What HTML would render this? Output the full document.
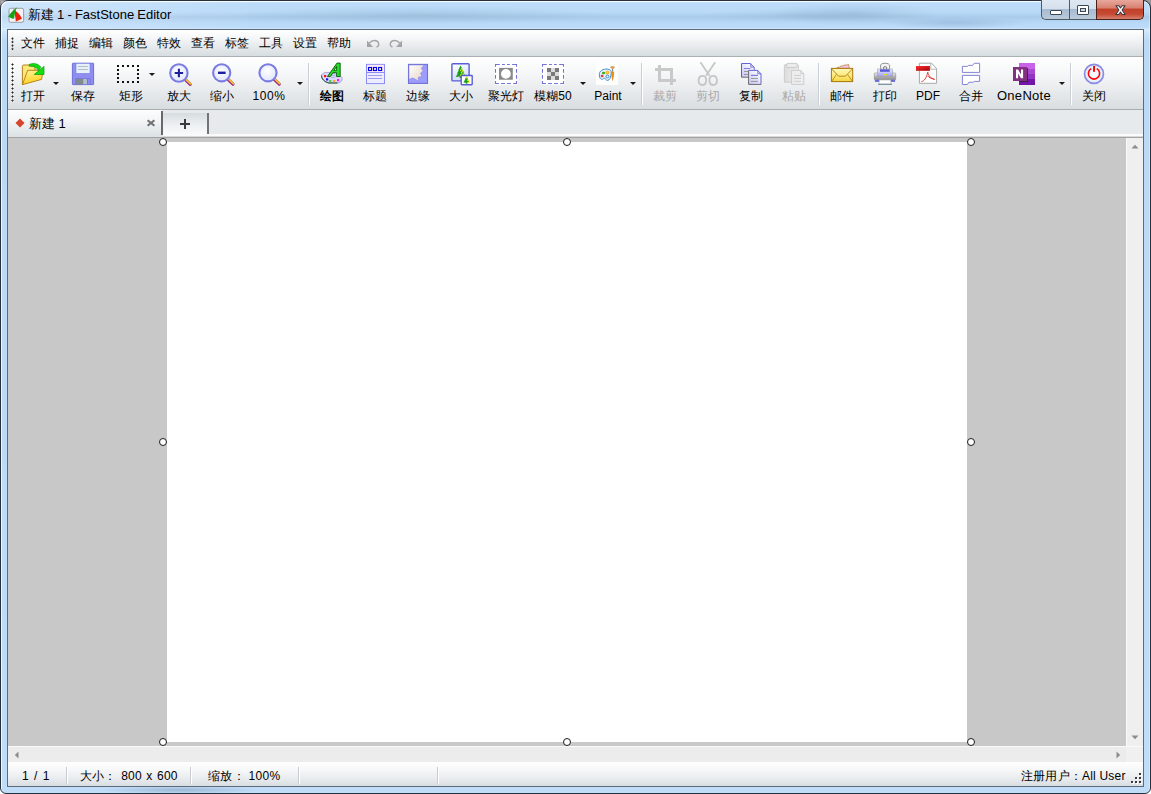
<!DOCTYPE html>
<html><head><meta charset="utf-8">
<style>
*{margin:0;padding:0;box-sizing:border-box}
html,body{width:1151px;height:794px;overflow:hidden;background:linear-gradient(180deg,#9c9c9c 0,#7a7a7a 12px,#ffffff 40px);font-family:"Liberation Sans",sans-serif;font-size:12px;color:#000}
.a{position:absolute}
#frame{position:absolute;left:0;top:0;width:1151px;height:794px;border:1px solid #27313c;box-shadow:inset 1px 1px 0 rgba(255,255,255,.75),inset -1px 0 0 rgba(255,255,255,.35);border-radius:8px 8px 6px 6px;background:linear-gradient(180deg,#dbeefe 0,#bcdcf9 2px,#badaf8 11px,#aacbea 16px,#b8d9f8 22px,#bddcf9 27px,#d6ebfd 28px,#bad9f7 40px,#bfdcf8 100%);overflow:hidden}
#client{position:absolute;left:7px;top:29px;width:1137px;height:758px;border:1px solid #5d6b79;background:#e7eaed}
.menu{position:absolute;left:8px;top:30px;width:1135px;height:27px;background:linear-gradient(180deg,#ffffff 0,#f7f8f9 25%,#e9ecee 60%,#d6dce0 100%);border-bottom:1px solid #aab0b4}
.mi{position:absolute;top:37px;font-size:12px;line-height:13px;white-space:nowrap}
.tb{position:absolute;left:8px;top:57px;width:1135px;height:53px;background:linear-gradient(180deg,#ffffff 0,#f6f7f8 30%,#e8ebed 65%,#d8dde0 100%);border-bottom:1px solid #a9adb1}
.lbl{position:absolute;top:90px;font-size:12px;line-height:13px;white-space:nowrap;transform:translateX(-50%)}
.dd{position:absolute;width:0;height:0;border-left:3px solid transparent;border-right:3px solid transparent;border-top:3px solid #1a1a1a}
.sep{position:absolute;top:63px;width:1px;height:42px;background:#c9cfd4;box-shadow:1px 0 0 #ffffff}
.dis{color:#a8a8a8}
svg{position:absolute;overflow:visible}
.cap{position:absolute;top:0;height:20px}
.stat{position:absolute;top:770px;font-size:12px;line-height:13px;white-space:nowrap}
.ssep{position:absolute;top:767px;width:1px;height:17px;background:#c8ccd0;box-shadow:1px 0 0 #fff}
.h{position:absolute;width:8.4px;height:8.4px;border:1.5px solid #1b1b1b;border-radius:50%;background:#fff}
</style></head><body>
<div id="frame"></div>
<!-- blurred bg streaks in glass -->
<div class="a" style="left:230px;top:6px;width:380px;height:18px;background:radial-gradient(ellipse at center,rgba(110,140,175,.22),rgba(120,150,185,0) 70%)"></div>
<div class="a" style="left:700px;top:8px;width:200px;height:14px;background:radial-gradient(ellipse at center,rgba(110,140,175,.15),rgba(120,150,185,0) 70%)"></div>

<div class="a" style="left:770px;top:2px;width:170px;height:24px;background:radial-gradient(ellipse at center,rgba(100,130,165,.20),rgba(100,130,165,0) 70%)"></div>
<div class="a" style="left:880px;top:17px;width:150px;height:12px;background:radial-gradient(ellipse at center,rgba(80,110,150,.22),rgba(80,110,150,0) 70%)"></div>
<div class="a" style="left:1px;top:1px;width:260px;height:28px;background:linear-gradient(90deg,rgba(255,255,255,.28),rgba(255,255,255,0))"></div>
<!-- title icon -->
<svg style="left:8px;top:7px" width="17" height="17" viewBox="0 0 17 17">
  <rect x="1" y="1.3" width="14.6" height="14" rx="1.6" fill="#f2f2f2" stroke="#8e969e" stroke-width="0.9"/>
  <path d="M5 2.2 C8.5 4 12.2 7.5 14 11.8 L7.8 14.6 C7.6 10 6.6 5.5 5 2.2 Z" fill="#e8200c"/>
  <path d="M8.8 0.2 C6 2.4 2.2 6 0.2 9.8 L4.6 11.8 L6.2 11.4 C6.4 8 7.2 4 8.8 0.2 Z" fill="#16a316"/>
</svg>
<div class="a" style="left:28px;top:7px;font-size:13px;line-height:16px;color:#000;word-spacing:-0.5px">新建 1 - FastStone Editor</div>

<!-- caption buttons -->
<div class="cap" style="left:1041px;width:29px;border:1px solid #4e5a66;border-top:none;border-right:none;border-radius:0 0 0 5px;background:linear-gradient(180deg,#dfe8f2 0,#d5e0ec 45%,#a9bbd0 50%,#b9cadc 100%)"></div>
<div class="cap" style="left:1069px;width:28px;border-bottom:1px solid #4e5a66;border-left:1px solid #4e5a66;background:linear-gradient(180deg,#dfe8f2 0,#d5e0ec 45%,#a9bbd0 50%,#b9cadc 100%)"></div>
<div class="cap" style="left:1096px;width:48px;border:1px solid #4b1f18;border-top:none;border-radius:0 0 5px 0;background:linear-gradient(180deg,#e8a89c 0,#d98272 40%,#c2412a 50%,#c54a33 75%,#d6826e 100%)"></div>
<div class="a" style="left:1050px;top:10px;width:12px;height:5px;background:#fff;border:1.5px solid #3c4854;border-radius:1px"></div>
<div class="a" style="left:1077px;top:5px;width:12px;height:10px;background:#fff;border:1.5px solid #3c4854;border-radius:1px"></div>
<div class="a" style="left:1080px;top:8px;width:6px;height:4px;background:#c9d7e6;border:1.5px solid #3c4854"></div>
<svg style="left:1114px;top:4.5px" width="13" height="11" viewBox="0 0 13 12">
  <path d="M1.5 0.7 H4.6 L6.5 3.3 L8.4 0.7 H11.5 L8.2 5.5 L11.6 10.3 H8.5 L6.5 7.6 L4.5 10.3 H1.4 L4.8 5.5 Z" fill="#ffffff" stroke="#3b3540" stroke-width="1.1" stroke-linejoin="round"/>
</svg>

<div class="a" style="left:100px;top:786px;width:160px;height:8px;background:radial-gradient(ellipse at center,rgba(90,120,150,.35),rgba(90,120,150,0) 70%)"></div>
<div id="client"></div>

<!-- menu -->
<div class="menu"></div>
<div class="a" style="left:11px;top:37px;width:3px;height:14px;background-image:radial-gradient(circle at 1.5px 1.5px,#2a2a2a 0.8px,rgba(255,255,255,0.9) 1.3px,transparent 1.5px);background-size:3px 3.5px"></div>
<div class="mi" style="left:21px">文件</div>
<div class="mi" style="left:55px">捕捉</div>
<div class="mi" style="left:89px">编辑</div>
<div class="mi" style="left:123px">颜色</div>
<div class="mi" style="left:157px">特效</div>
<div class="mi" style="left:191px">查看</div>
<div class="mi" style="left:225px">标签</div>
<div class="mi" style="left:259px">工具</div>
<div class="mi" style="left:293px">设置</div>
<div class="mi" style="left:327px">帮助</div>
<svg style="left:366px;top:39px" width="14" height="9" viewBox="0 0 14 9">
  <path d="M3.5 4 C6 1 11 0.5 12.5 4 C13.5 6 12 7.5 10.5 8" fill="none" stroke="#a3a3a3" stroke-width="1.4"/>
  <path d="M1 1.5 L1 8 L7 8 Z" fill="#a3a3a3"/>
</svg>
<svg style="left:389px;top:39px" width="14" height="9" viewBox="0 0 14 9">
  <path d="M10.5 4 C8 1 3 0.5 1.5 4 C0.5 6 2 7.5 3.5 8" fill="none" stroke="#a3a3a3" stroke-width="1.4"/>
  <path d="M13 1.5 L13 8 L7 8 Z" fill="#a3a3a3"/>
</svg>

<!-- toolbar -->
<div class="tb"></div>
<div class="a" style="left:11px;top:63px;width:3px;height:40px;background-image:radial-gradient(circle at 1.5px 1.5px,#2a2a2a 0.8px,rgba(255,255,255,0.9) 1.3px,transparent 1.5px);background-size:3px 4px"></div>

<div class="lbl" style="left:33px">打开</div>
<div class="lbl" style="left:83px">保存</div>
<div class="lbl" style="left:131px">矩形</div>
<div class="lbl" style="left:179px">放大</div>
<div class="lbl" style="left:222px">缩小</div>
<div class="lbl" style="left:269px;letter-spacing:0.6px">100%</div>
<div class="lbl" style="left:332px;font-weight:bold">绘图</div>
<div class="lbl" style="left:375px">标题</div>
<div class="lbl" style="left:418px">边缘</div>
<div class="lbl" style="left:461px">大小</div>
<div class="lbl" style="left:506px">聚光灯</div>
<div class="lbl" style="left:553px">模糊50</div>
<div class="lbl" style="left:608px">Paint</div>
<div class="lbl dis" style="left:665px">裁剪</div>
<div class="lbl dis" style="left:708px">剪切</div>
<div class="lbl" style="left:751px">复制</div>
<div class="lbl dis" style="left:794px">粘贴</div>
<div class="lbl" style="left:842px">邮件</div>
<div class="lbl" style="left:885px">打印</div>
<div class="lbl" style="left:928px">PDF</div>
<div class="lbl" style="left:971px">合并</div>
<div class="lbl" style="left:1024px;font-size:13px;letter-spacing:0.3px;top:89px">OneNote</div>
<div class="lbl" style="left:1094px">关闭</div>

<div class="dd" style="left:53px;top:82px"></div>
<div class="dd" style="left:149px;top:73px"></div>
<div class="dd" style="left:297px;top:82px"></div>
<div class="dd" style="left:580px;top:82px"></div>
<div class="dd" style="left:630px;top:82px"></div>
<div class="dd" style="left:1059px;top:82px"></div>

<div class="sep" style="left:308px"></div>
<div class="sep" style="left:641px"></div>
<div class="sep" style="left:818px"></div>
<div class="sep" style="left:1070px"></div>

<!-- tabs -->
<div class="a" style="left:8px;top:110px;width:154px;height:27px;background:linear-gradient(180deg,#fdfdfd 0,#f3f5f6 40%,#dbe1e5 100%)"></div>
<div class="a" style="left:161px;top:111px;width:2px;height:24px;background:#686868"></div>
<div class="a" style="left:163px;top:113px;width:45px;height:21px;background:linear-gradient(180deg,#d6dce0 0,#eef1f3 60%,#f8f9fa 100%)"></div>
<div class="a" style="left:207px;top:113px;width:2px;height:21px;background:#747474"></div>
<div class="a" style="left:163px;top:134px;width:980px;height:2px;background:#fbfbfb"></div>
<div class="a" style="left:163px;top:136px;width:980px;height:1px;background:#d8d8d8"></div>
<div class="a" style="left:8px;top:137px;width:1135px;height:1px;background:#a3a3a3"></div>
<svg style="left:15px;top:118px" width="10" height="10" viewBox="0 0 10 10"><path d="M5 0.5 L9.5 5 L5 9.5 L0.5 5 Z" fill="#d8432c"/></svg>
<div class="a" style="left:29px;top:116px;font-size:13px;line-height:15px">新建 1</div>
<svg style="left:146px;top:119px" width="10" height="8" viewBox="0 0 10 8"><path d="M1.6 1.2 L8.4 6.8 M8.4 1.2 L1.6 6.8" stroke="#727272" stroke-width="2.1"/></svg>
<svg style="left:179px;top:118px" width="12" height="12" viewBox="0 0 12 12"><path d="M6 1 V11 M1 6 H11" stroke="#3a3a3a" stroke-width="2"/></svg>

<!-- canvas area -->
<div class="a" style="left:8px;top:138px;width:1118px;height:608px;background:#c8c8c8"></div>
<div class="a" style="left:167px;top:142px;width:800px;height:600px;background:#ffffff"></div>
<div class="a" style="left:1126px;top:138px;width:1px;height:609px;background:#fafafa"></div>
<div class="a" style="left:1127px;top:138px;width:16px;height:609px;background:#efefef"></div>
<svg style="left:1131px;top:144px" width="8" height="5" viewBox="0 0 8 5"><path d="M0.5 4.5 L4 0.8 L7.5 4.5 Z" fill="#8c8c8c"/></svg>
<svg style="left:1131px;top:735px" width="8" height="5" viewBox="0 0 8 5"><path d="M0.5 0.5 L4 4.2 L7.5 0.5 Z" fill="#8c8c8c"/></svg>
<div class="a" style="left:8px;top:746px;width:1135px;height:1px;background:#fafafa"></div>
<div class="a" style="left:8px;top:747px;width:1118px;height:15px;background:#ececec"></div>
<div class="a" style="left:1126px;top:747px;width:17px;height:15px;background:#f0f0f0"></div>
<svg style="left:14px;top:751px" width="5" height="8" viewBox="0 0 5 8"><path d="M4.5 0.5 L0.8 4 L4.5 7.5 Z" fill="#8c8c8c"/></svg>
<svg style="left:1116px;top:751px" width="5" height="8" viewBox="0 0 5 8"><path d="M0.5 0.5 L4.2 4 L0.5 7.5 Z" fill="#8c8c8c"/></svg>

<!-- handles -->
<div class="h" style="left:158.8px;top:137.8px"></div>
<div class="h" style="left:562.8px;top:137.8px"></div>
<div class="h" style="left:966.8px;top:137.8px"></div>
<div class="h" style="left:158.8px;top:437.8px"></div>
<div class="h" style="left:966.8px;top:437.8px"></div>
<div class="h" style="left:158.8px;top:737.8px"></div>
<div class="h" style="left:562.8px;top:737.8px"></div>
<div class="h" style="left:966.8px;top:737.8px"></div>

<!-- status bar -->
<div class="a" style="left:8px;top:762px;width:1135px;height:24px;background:linear-gradient(180deg,#ffffff 0,#f7f8f9 30%,#e6e9ec 75%,#d9dee2 100%)"></div>
<div class="stat" style="left:22px;word-spacing:2px">1 / 1</div>
<div class="ssep" style="left:66px"></div>
<div class="stat" style="left:80px;word-spacing:1px;letter-spacing:0.2px">大小： 800 x 600</div>
<div class="ssep" style="left:190px"></div>
<div class="stat" style="left:208px;letter-spacing:0.3px">缩放： 100%</div>
<div class="ssep" style="left:298px"></div>
<div class="ssep" style="left:437px"></div>
<div class="stat" style="left:1021px;letter-spacing:0.2px">注册用户：All User</div>
<svg style="left:1130px;top:772px" width="13" height="13" viewBox="0 0 13 13" shape-rendering="crispEdges">
 <g fill="#ffffff"><rect x="10" y="2" width="2" height="2"/><rect x="6" y="6" width="2" height="2"/><rect x="10" y="6" width="2" height="2"/><rect x="2" y="10" width="2" height="2"/><rect x="6" y="10" width="2" height="2"/><rect x="10" y="10" width="2" height="2"/></g>
 <g fill="#3a3a3a"><rect x="9" y="1" width="2" height="2"/><rect x="5" y="5" width="2" height="2"/><rect x="9" y="5" width="2" height="2"/><rect x="1" y="9" width="2" height="2"/><rect x="5" y="9" width="2" height="2"/><rect x="9" y="9" width="2" height="2"/></g>
</svg>

<div id="icons">
<!-- open -->
<svg style="left:18px;top:60px" width="30" height="30" viewBox="0 0 30 30">
  <defs><linearGradient id="fy" x1="0" y1="0" x2="0.3" y2="1"><stop offset="0" stop-color="#fff3a0"/><stop offset="1" stop-color="#ffd21c"/></linearGradient></defs>
  <path d="M4.4 24.6 V6.4 Q4.4 5 5.8 5 H11.5 L12.8 6.2 H17 V10.2 H22.5 L22 15 Z" fill="#ffe87a" stroke="#a8770e" stroke-width="0.9"/>
  <path d="M4.5 24.6 L9.6 10.3 H25 L23.6 19.4 Z" fill="url(#fy)" stroke="#b07a10" stroke-width="0.9"/>
  <path d="M11 4.6 C14.5 2.8 19.5 2.8 23 7.2 L20.6 10.4 C18.2 7 14.5 5.8 11 6.2 Z" fill="#14d814" stroke="#0fa00f" stroke-width="0.6"/>
  <path d="M16.2 14.5 L26 14.5 L26 6.4 Z" fill="#10e010" stroke="#0c9c0c" stroke-width="0.7" stroke-linejoin="round"/>
</svg>
<!-- save -->
<svg style="left:68px;top:60px" width="30" height="30" viewBox="0 0 30 30">
  <rect x="4.4" y="3.2" width="21.2" height="21.4" rx="0.6" fill="#8e8ef2" stroke="#6767d6" stroke-width="0.9"/>
  <rect x="8" y="3.4" width="14" height="10" fill="#e4f2fb" stroke="#7b7be0" stroke-width="0.6"/>
  <path d="M10 6.5 H19.8 M10 9.5 H19.8" stroke="#b4b4b4" stroke-width="0.9"/>
  <rect x="7.4" y="18.2" width="15.2" height="6" fill="#7474d8"/>
  <rect x="8.2" y="18.9" width="7" height="5.3" fill="#7f8c8a"/>
  <rect x="15.2" y="18.9" width="3.8" height="5.3" fill="#b2bcd2"/>
  <rect x="20" y="18.9" width="1.8" height="5.3" fill="#8c8cf0"/>
</svg>
<!-- rect dotted -->
<svg style="left:110px;top:58px" width="40" height="30" viewBox="0 0 40 30">
  <g fill="#111">
    <rect x="7" y="7" width="2" height="2"/><rect x="12" y="7" width="2" height="2"/><rect x="17" y="7" width="2" height="2"/><rect x="22" y="7" width="2" height="2"/><rect x="27" y="7" width="2" height="2"/>
    <rect x="7" y="23" width="2" height="2"/><rect x="12" y="23" width="2" height="2"/><rect x="17" y="23" width="2" height="2"/><rect x="22" y="23" width="2" height="2"/><rect x="27" y="23" width="2" height="2"/>
    <rect x="7" y="11" width="2" height="2"/><rect x="7" y="15" width="2" height="2"/><rect x="7" y="19" width="2" height="2"/>
    <rect x="27" y="11" width="2" height="2"/><rect x="27" y="15" width="2" height="2"/><rect x="27" y="19" width="2" height="2"/>
  </g>
</svg>
<!-- zoom in / out / 100 -->
<svg style="left:165px;top:58px" width="30" height="30" viewBox="0 0 30 30">
  <defs><radialGradient id="zg" cx="0.45" cy="0.4" r="0.6"><stop offset="0" stop-color="#ffffff"/><stop offset="1" stop-color="#dfe6fb"/></radialGradient></defs>
  <path d="M19.8 21.2 L25.2 26.4" stroke="#a0308a" stroke-width="3.2" stroke-linecap="round"/>
  <path d="M20.3 20.8 L25.6 25.8" stroke="#f2c22a" stroke-width="1.8" stroke-linecap="round"/>
  <circle cx="13.9" cy="15" r="8.7" fill="url(#zg)" stroke="#7b7be4" stroke-width="2.1"/>
  <path d="M9.7 15 H18.1 M13.9 10.8 V19.2" stroke="#1e1ea0" stroke-width="2.1"/>
</svg>
<svg style="left:208px;top:58px" width="30" height="30" viewBox="0 0 30 30">
  <path d="M19.6 21 L25 26.2" stroke="#a0308a" stroke-width="3.2" stroke-linecap="round"/>
  <path d="M20.1 20.6 L25.4 25.6" stroke="#f2c22a" stroke-width="1.8" stroke-linecap="round"/>
  <circle cx="13.7" cy="14.8" r="8.6" fill="url(#zg)" stroke="#7b7be4" stroke-width="2.1"/>
  <path d="M10 14.8 H17.6" stroke="#1e1ea0" stroke-width="2.4"/>
</svg>
<svg style="left:254px;top:58px" width="30" height="30" viewBox="0 0 30 30">
  <path d="M19.9 21 L25.3 26.2" stroke="#a0308a" stroke-width="3.2" stroke-linecap="round"/>
  <path d="M20.4 20.6 L25.7 25.6" stroke="#f2c22a" stroke-width="1.8" stroke-linecap="round"/>
  <circle cx="14" cy="14.8" r="8.6" fill="url(#zg)" stroke="#7b7be4" stroke-width="2.1"/>
</svg>
<!-- draw -->
<svg style="left:318px;top:60px" width="28" height="28" viewBox="0 0 28 28">
  <path d="M3.6 15.5 C4 12.8 8 12 11.5 12.6 C16 13.4 22.5 14.8 23.8 17.5 C24.6 19.6 23.5 22.6 20 22.9 L11 23 C7.5 22.6 3.2 19.5 3.6 15.5 Z" fill="#dcdcfa" stroke="#8e8ee0" stroke-width="0.8"/>
  <path d="M3.6 15.5 C3.4 18.6 6 21.8 11 23 L19.5 23" fill="none" stroke="#1d4d1d" stroke-width="1"/>
  <rect x="6" y="15" width="2.2" height="2.2" fill="#ff1010"/>
  <rect x="8" y="18.3" width="2.2" height="2.2" fill="#1010ff"/>
  <rect x="11.2" y="20" width="2.2" height="2.2" fill="#55cc33"/>
  <rect x="15" y="20" width="2.2" height="2.2" fill="#ffa030"/>
  <rect x="19" y="19" width="2.2" height="2.2" fill="#ff10ff"/>
  <ellipse cx="15" cy="16.4" rx="2" ry="1.3" fill="none" stroke="#a0a0e8" stroke-width="0.8"/>
  <path d="M9.4 16.6 L19 3.1 H22.2 V16.6 H18.6 V12.6 H15 L12.3 16.6 Z M18.6 10.4 V6.4 L15.9 10.4 Z" fill="#22e022" stroke="#0b560b" stroke-width="0.9" fill-rule="evenodd"/>
</svg>
<!-- title -->
<svg style="left:362px;top:60px" width="28" height="28" viewBox="0 0 28 28">
  <rect x="4.5" y="4.4" width="18" height="19.2" fill="#ececfd" stroke="#8c8cf4" stroke-width="1"/>
  <rect x="5" y="4.9" width="17" height="7.4" fill="#f8e8f2"/>
  <path d="M4.5 12.5 H22.5" stroke="#8c8cf4" stroke-width="1"/>
  <g fill="#e8e8ff" stroke="#0000e6" stroke-width="1.1">
    <rect x="6.6" y="7.5" width="3" height="3"/><rect x="11.5" y="7.5" width="3" height="3"/><rect x="16.6" y="7.5" width="3" height="3"/>
  </g>
  <path d="M6 15.5 H20 M6 18.5 H20" stroke="#9494f0" stroke-width="0.9"/>
</svg>
<!-- edge -->
<svg style="left:404px;top:60px" width="28" height="28" viewBox="0 0 28 28">
  <defs><linearGradient id="eg" x1="0" y1="0" x2="1" y2="1"><stop offset="0" stop-color="#ffffff"/><stop offset="1" stop-color="#e6d2c0"/></linearGradient></defs>
  <rect x="4.5" y="4.4" width="19" height="19" fill="#9c9cfd" stroke="#7070d8" stroke-width="1.1"/>
  <path d="M5 5 H20 L17.2 8.5 L19.2 10.8 L16.5 13.2 L18 16.6 L14.3 17.2 L14.4 21.2 L12 19.6 L8.5 17.8 L5 19.6 Z" fill="url(#eg)" stroke="#8080e0" stroke-width="0.5"/>
</svg>
<!-- size -->
<svg style="left:448px;top:60px" width="28" height="28" viewBox="0 0 28 28">
  <defs><linearGradient id="sg" x1="0" y1="0" x2="0.3" y2="1"><stop offset="0" stop-color="#ffffff"/><stop offset="1" stop-color="#cfe0f8"/></linearGradient></defs>
  <rect x="3.9" y="3.8" width="17.2" height="17.1" rx="0.8" fill="url(#sg)" stroke="#5c5cd8" stroke-width="1.4"/>
  <path d="M12.5 5.6 L14.6 9.2 L13.9 9.3 L16.1 12.3 L15.2 12.4 L17.4 15.6 L13.6 16.2 L13.6 18 L11.6 18 L11.6 16.4 L7.6 17 L9.8 13.6 L8.9 13.5 L10.8 10.5 L10.1 10.4 Z" fill="#1e9e1e"/>
  <g fill="#f4f41c"><rect x="13" y="8" width="1.3" height="1.3"/><rect x="12" y="9.6" width="1.3" height="1.3"/><rect x="14" y="10.3" width="1.3" height="1.3"/><rect x="13" y="11.6" width="1.3" height="1.3"/><rect x="13.3" y="13.4" width="1.3" height="1.3"/><rect x="12" y="14.6" width="1.3" height="1.3"/><rect x="15" y="13.6" width="1.3" height="1.3"/></g>
  <rect x="13.2" y="15.5" width="11" height="9.2" rx="0.6" fill="#ffffff" stroke="#5c5cd8" stroke-width="1.4"/>
  <path d="M18.5 16.6 L20 18.8 L19.5 18.9 L21.6 22 L19.3 22.6 L19.3 23.8 L17.8 23.8 L17.8 22.7 L15.4 22.6 L17.4 19 L17 18.9 Z" fill="#1e9e1e"/>
  <g fill="#f4f41c"><rect x="18" y="17.2" width="1.2" height="1.2"/><rect x="19.2" y="19.6" width="1.6" height="1.4"/><rect x="20" y="21.6" width="1.2" height="1.2"/></g>
</svg>
<!-- spotlight -->
<svg style="left:492px;top:60px" width="28" height="28" viewBox="0 0 28 28">
  <rect x="2.9" y="3.2" width="22.4" height="21.4" fill="#ffffff"/>
  <path d="M3.2 4.5 H7.8 M3.5 4 V6.7 M10 4.5 H12.9 M15 4.5 H17.8 M20.1 4.5 H24.9 M24.5 4 V6.7 M3.5 9 V12.7 M3.5 15 V18.7 M3.5 21 V24 M24.5 9 V12.7 M24.5 15 V18.7 M24.5 21 V24 M3.2 23.5 H6.9 M9 23.5 H12.9 M15 23.5 H18.9 M21.2 23.5 H24.9" fill="none" stroke="#7474d4" stroke-width="1.05"/>
  <rect x="7.05" y="7.9" width="13.75" height="11.85" fill="#8a8a8a"/>
  <circle cx="13.9" cy="13.9" r="4.9" fill="#ffffff"/>
</svg>
<!-- blur -->
<svg style="left:539px;top:60px" width="28" height="28" viewBox="0 0 28 28">
  <rect x="2.9" y="3.2" width="22.4" height="21.4" fill="#ffffff"/>
  <path d="M3.2 4.5 H7.8 M3.5 4 V6.7 M10 4.5 H12.9 M15 4.5 H17.8 M20.1 4.5 H24.9 M24.5 4 V6.7 M3.5 9 V12.7 M3.5 15 V18.7 M3.5 21 V24 M24.5 9 V12.7 M24.5 15 V18.7 M24.5 21 V24 M3.2 23.5 H6.9 M9 23.5 H12.9 M15 23.5 H18.9 M21.2 23.5 H24.9" fill="none" stroke="#7474d4" stroke-width="1.05"/>
  <rect x="8" y="8" width="12" height="12" fill="#dcdcdc"/>
  <g fill="#7a7a7a"><rect x="8" y="8" width="4" height="4"/><rect x="16" y="8" width="4" height="4"/><rect x="12" y="12" width="4" height="4"/><rect x="8" y="16" width="4" height="4"/><rect x="16" y="16" width="4" height="4"/></g>
</svg>
<!-- paint -->
<svg style="left:593px;top:60px" width="28" height="28" viewBox="0 0 28 28">
  <rect x="3" y="3" width="22" height="22" rx="1.2" fill="#ffffff"/>
  <path d="M6.3 15 C6 10.5 10.5 8.7 14.5 9.1 C17.5 9.4 18.8 11 18.2 13.5 C17.6 16 17.6 18.5 16 19.8 C14.2 21.2 12.6 19.8 12.4 18.6 C12 17.2 10.8 18.8 9.6 19.2 C7.8 19.8 6.4 18 6.3 15 Z" fill="#e6f4fc" stroke="#3a88c6" stroke-width="0.95"/>
  <ellipse cx="10.6" cy="13" rx="1.7" ry="1.3" fill="#44aa2a"/>
  <circle cx="14.4" cy="12.5" r="1.5" fill="#ffd040" stroke="#f0a000" stroke-width="0.8"/>
  <rect x="7.8" y="14.8" width="2.6" height="2.4" fill="#e04040"/>
  <circle cx="14.4" cy="16.4" r="1.4" fill="#ffffff" stroke="#3a88c6" stroke-width="1"/>
  <path d="M17 7.6 Q17.2 5.8 19.5 5.9 Q21.9 5.8 22 7.6 L20.2 9 L19 9 Z" fill="#d9a462"/>
  <path d="M19 8.8 H20.2 V11.8 H19 Z" fill="#8a8a8a"/>
  <path d="M18.2 12 Q19.6 11 21.1 12 Q21.3 16 19.6 21.4 Q17.9 16 18.2 12 Z" fill="#f38512"/>
</svg>
<!-- crop (disabled) -->
<svg style="left:650px;top:58px" width="30" height="30" viewBox="0 0 30 30" shape-rendering="crispEdges">
  <g fill="#c9c9c9">
    <rect x="8" y="7" width="3" height="17"/>
    <rect x="5" y="10" width="18" height="3"/>
    <rect x="20" y="10" width="3" height="17"/>
    <rect x="8" y="21" width="18" height="3"/>
  </g>
</svg>
<!-- scissors (disabled) -->
<svg style="left:694px;top:60px" width="28" height="28" viewBox="0 0 28 28">
  <path d="M6.4 2.3 L15.6 15.8 M21.2 2.3 L12 15.8" fill="none" stroke="#c8c8c8" stroke-width="1.9"/>
  <path d="M8.6 15.9 C11 15.9 12.4 17.6 12.2 20.6 C12 23.6 10.6 25 8.4 25 C6 25 4.6 23.4 4.6 20.6 C4.6 17.6 6.2 15.9 8.6 15.9 Z" fill="none" stroke="#c6c6c6" stroke-width="1.8"/>
  <path d="M19 15.9 C16.6 15.9 15.2 17.6 15.4 20.6 C15.6 23.6 17 25 19.2 25 C21.6 25 23 23.4 23 20.6 C23 17.6 21.4 15.9 19 15.9 Z" fill="none" stroke="#c6c6c6" stroke-width="1.8"/>
</svg>
<!-- copy -->
<svg style="left:737px;top:60px" width="28" height="28" viewBox="0 0 28 28">
  <defs><linearGradient id="cg" x1="0.8" y1="0" x2="0" y2="1"><stop offset="0" stop-color="#ffffff"/><stop offset="1" stop-color="#c4c4f6"/></linearGradient></defs>
  <path d="M4.5 17.2 V3.5 H13.4 L17.2 7.3 V17.2 Z" fill="url(#cg)"/>
  <path d="M4.5 17.2 V3.5 M4.5 17.2 H11.5" stroke="#6a6a6a" stroke-width="1"/>
  <path d="M4.5 3.5 H13.4 L17.2 7.3 V10" fill="none" stroke="#6464d4" stroke-width="1"/>
  <path d="M13.8 3.5 V7.1 H17.2" fill="none" stroke="#6464d4" stroke-width="0.9"/>
  <path d="M7 8.5 H13.5" stroke="#7474e8" stroke-width="0.9"/>
  <path d="M7 11.4 H11 M7 14.4 H11" stroke="#8a8a8a" stroke-width="0.9"/>
  <path d="M11.6 24.4 V10.4 H20.6 L24 13.8 V24.4 Z" fill="url(#cg)"/>
  <path d="M11.6 24.4 V10.4 M11.6 24.4 H24" stroke="#6a6a6a" stroke-width="1"/>
  <path d="M11.6 10.4 H20.6 L24 13.8 V24.4" fill="none" stroke="#6464d4" stroke-width="1"/>
  <path d="M20.8 10.4 V13.8 H24" fill="none" stroke="#6464d4" stroke-width="0.9"/>
  <path d="M14 15.4 H21 M14 18.4 H21 M14 21.4 H21" stroke="#8a8a8a" stroke-width="0.9"/>
  <path d="M14 15.4 H21" stroke="#7474e8" stroke-width="0.9"/>
</svg>
<!-- paste (disabled) -->
<svg style="left:780px;top:60px" width="28" height="28" viewBox="0 0 28 28">
  <defs><linearGradient id="pg" x1="0" y1="0" x2="1" y2="0"><stop offset="0" stop-color="#dcdcdc"/><stop offset="1" stop-color="#f0f0f0"/></linearGradient></defs>
  <path d="M4.4 22.2 V5.6 Q4.4 4.6 5.4 4.6 H17.4 Q18.4 4.6 18.4 5.6 V22.2 Z" fill="url(#pg)" stroke="#cacaca" stroke-width="0.9"/>
  <rect x="6.8" y="3.4" width="10.4" height="4.2" rx="0.8" fill="#ececec" stroke="#c6c6c6" stroke-width="0.9"/>
  <path d="M11.6 24.4 V10.4 H20.6 L23.8 13.6 V24.4 Z" fill="#eeeeee" stroke="#c8c8c8" stroke-width="0.9"/>
  <path d="M20.8 10.4 V13.6 H23.8" fill="none" stroke="#c8c8c8" stroke-width="0.8"/>
  <path d="M14 15.4 H21 M14 18.4 H21 M14 21.4 H21" stroke="#c8c8c8" stroke-width="0.9"/>
</svg>
<!-- mail -->
<svg style="left:828px;top:60px" width="28" height="28" viewBox="0 0 28 28">
  <defs><linearGradient id="mg" x1="0" y1="0" x2="0" y2="1"><stop offset="0" stop-color="#fff8b8"/><stop offset="0.6" stop-color="#fbe878"/><stop offset="1" stop-color="#f4d23a"/></linearGradient></defs>
  <path d="M8.3 8.3 Q9.5 6.8 11.5 7.2 L12.4 6.3 Q14 5.6 15.2 5.8 L16.2 5 Q18 4.8 19.2 5.3 L19.8 4.2 L20.6 4.6 L21.3 8.3 Z" fill="#f8c0f0" stroke="#b08020" stroke-width="0.7"/>
  <rect x="3.4" y="8.4" width="21.3" height="13.2" fill="url(#mg)" stroke="#a8780e" stroke-width="1"/>
  <path d="M3.8 9 L10.6 16.2 H17.6 L24.3 9" fill="none" stroke="#b08010" stroke-width="0.9"/>
  <path d="M3.8 21.2 L8.4 14.4 M24.3 21.2 L19.6 14.4" fill="none" stroke="#b08010" stroke-width="0.8"/>
</svg>
<!-- print -->
<svg style="left:871px;top:60px" width="28" height="28" viewBox="0 0 28 28">
  <defs><linearGradient id="prg" x1="0" y1="0" x2="0" y2="1"><stop offset="0" stop-color="#e4ecfc"/><stop offset="1" stop-color="#a0a0f4"/></linearGradient>
  <linearGradient id="prb" x1="0" y1="0" x2="0" y2="1"><stop offset="0" stop-color="#f4f4f4"/><stop offset="0.5" stop-color="#b4b4b4"/><stop offset="1" stop-color="#8c8c8c"/></linearGradient></defs>
  <path d="M9.6 9.5 V5 Q10 3.2 14 3.2 Q18 3.2 18.6 5 V9.5" fill="#f4f4f4" stroke="#8a8a8a" stroke-width="0.9"/>
  <path d="M12.6 9.5 V7.2 Q14 6 15.6 7.2 V9.5" fill="none" stroke="#707070" stroke-width="1"/>
  <rect x="3.3" y="13" width="21.4" height="6.8" rx="0.8" fill="url(#prb)" stroke="#8a8a8a" stroke-width="0.6"/>
  <rect x="6.4" y="9" width="15.2" height="7.2" fill="url(#prg)" stroke="#9a9a9a" stroke-width="0.5"/>
  <rect x="9" y="9.3" width="9.7" height="2.5" fill="#5a5ad4"/>
  <rect x="11.8" y="13.9" width="4.4" height="1.3" rx="0.6" fill="#e8e010"/>
  <rect x="3.9" y="19.7" width="4.2" height="2.2" fill="#6a6ad8"/>
  <rect x="19.9" y="19.7" width="4.2" height="2.2" fill="#6a6ad8"/>
  <path d="M8 24 L8.6 20 H19.4 L20 24 Z" fill="#ffffff" stroke="#a0a0a0" stroke-width="0.5"/>
  <path d="M7 24.3 H21" stroke="#5a7a90" stroke-width="0.9"/>
</svg>
<!-- pdf -->
<svg style="left:914px;top:60px" width="28" height="28" viewBox="0 0 28 28">
  <defs><linearGradient id="rg" x1="0" y1="0" x2="1" y2="1"><stop offset="0" stop-color="#ff3030"/><stop offset="1" stop-color="#a00008"/></linearGradient></defs>
  <path d="M5.4 23.3 V3.2 H17.6 L22.6 8.6 V23.3 Z" fill="#ffffff" stroke="#a8a8a8" stroke-width="1"/>
  <path d="M16.8 3.2 V9.2 H22.6" fill="none" stroke="#b0b0b0" stroke-width="0.9"/>
  <rect x="2" y="6" width="13.9" height="4.8" fill="url(#rg)"/>
  <path d="M7.4 21.5 C10 21.6 12.4 18 13.8 12.2 C14.2 15 15.6 17.6 20.6 19.4 M13.8 16 C15 17.8 17 18.4 20.6 19.4" fill="none" stroke="#e02020" stroke-width="0.85"/>
</svg>
<!-- merge -->
<svg style="left:957px;top:60px" width="28" height="28" viewBox="0 0 28 28">
  <path d="M5.4 12.4 V6.4 H10.6 L11.4 5.4 H15.6 L17.2 3.3 H22.6 V12.4 Z" fill="#ffffff" stroke="#8484d4" stroke-width="1"/>
  <path d="M5.4 15.4 H22.6 V21.4 H17.4 L15.9 22.3 H11.8 L10.4 24.5 H5.4 Z" fill="#ffffff" stroke="#8484d4" stroke-width="1"/>
</svg>
<!-- onenote -->
<svg style="left:1010px;top:60px" width="28" height="28" viewBox="0 0 28 28" shape-rendering="crispEdges">
  <rect x="9" y="3" width="16" height="5.8" fill="#c862ea"/>
  <rect x="9" y="8.8" width="16" height="5" fill="#aa48d2"/>
  <rect x="9" y="13.8" width="16" height="5" fill="#9434c2"/>
  <rect x="9" y="18.8" width="16" height="6" fill="#7416aa"/>
  <rect x="9.2" y="7.8" width="8.8" height="14" fill="#3a1a40" opacity="0.85"/>
  <rect x="3" y="7" width="14.4" height="13.8" fill="#80317f"/>
  <path d="M6 18.2 V9.6 H8.1 L11 14.4 V9.6 H13.1 V18.2 H11 L8.1 13.4 V18.2 Z" fill="#ffffff" shape-rendering="geometricPrecision"/>
</svg>
<!-- power -->
<svg style="left:1080px;top:60px" width="28" height="28" viewBox="0 0 28 28">
  <defs><radialGradient id="pwg" cx="0.5" cy="0.5" r="0.5"><stop offset="0" stop-color="#f8fbff"/><stop offset="0.8" stop-color="#e8f0fc"/><stop offset="1" stop-color="#c8d0f8"/></radialGradient></defs>
  <circle cx="14" cy="13.9" r="9.5" fill="url(#pwg)" stroke="#8c8ce2" stroke-width="1.6"/>
  <path d="M11.3 8.6 A5.6 5.6 0 1 0 16.7 8.6" fill="none" stroke="#ff0000" stroke-width="1.6"/>
  <rect x="13.1" y="6" width="1.9" height="5.8" fill="#ff0000"/>
</svg>
</div>
</body></html>
